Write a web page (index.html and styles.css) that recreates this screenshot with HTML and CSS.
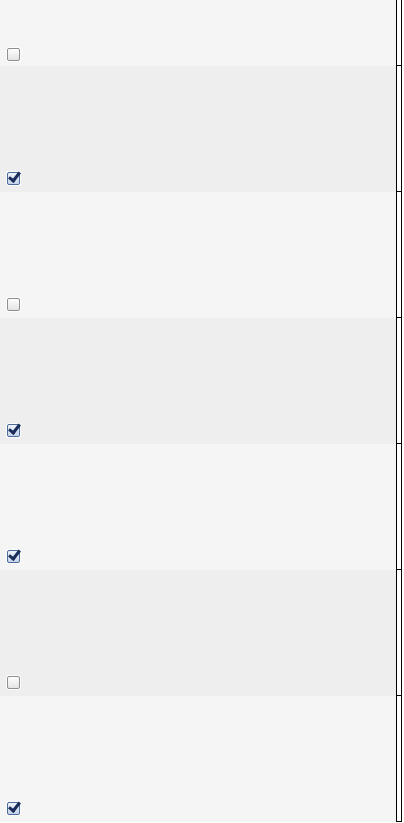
FILE: index.html
```html
<!DOCTYPE html>
<html lang="en">

<head>
	<meta charset="UTF-8">
	<meta name="viewport" content="width=device-width, initial-scale=1.0">
	<title>Liste</title>
	<link rel="stylesheet" href="styles.css">
</head>

<body>
	<div class="list">
		<div class="row"><div class="cell"><input type="checkbox"></div><div class="side"></div></div>
		<div class="row"><div class="cell"><input type="checkbox" checked></div><div class="side"></div></div>
		<div class="row"><div class="cell"><input type="checkbox"></div><div class="side"></div></div>
		<div class="row"><div class="cell"><input type="checkbox" checked></div><div class="side"></div></div>
		<div class="row"><div class="cell"><input type="checkbox" checked></div><div class="side"></div></div>
		<div class="row"><div class="cell"><input type="checkbox"></div><div class="side"></div></div>
		<div class="row"><div class="cell"><input type="checkbox" checked></div><div class="side"></div></div>
	</div>
</body>

</html>
```

FILE: styles.css
```css
body {
	margin: 0;
	background-color: #fff;
	font-family: Arial, "Liberation Sans", sans-serif;
}

.list {
	margin-top: -60px;
	width: 402px;
}

.row {
	display: flex;
	height: 126px;
}

.row:nth-child(odd) .cell {
	background-color: #f5f5f5;
}

.row:nth-child(even) .cell {
	background-color: #eeeeee;
}

.cell {
	flex: 1;
	display: flex;
	align-items: flex-end;
	padding: 0 0 7px 7px;
}

.row:first-child .cell {
	padding-bottom: 5px;
}

.side {
	width: 4px;
	border: 1px solid #000;
	border-top: none;
}

input[type="checkbox"] {
	appearance: none;
	-webkit-appearance: none;
	position: relative;
	width: 13px;
	height: 13px;
	margin: 0;
	border: 1px solid #8f8f8f;
	border-radius: 2px;
	background: linear-gradient(#fdfdfd, #e4e4e4);
	box-shadow: 0 0 0 1px rgba(255, 255, 255, 0.8);
	box-sizing: border-box;
}

input[type="checkbox"]:checked {
	border-color: #4d6b9a;
	background: linear-gradient(#eef3fa, #c6d4ea);
}

input[type="checkbox"]:checked::after {
	content: "";
	position: absolute;
	left: 3px;
	top: -3px;
	width: 4px;
	height: 9px;
	border: solid #1a2d5a;
	border-width: 0 3px 3px 0;
	transform: rotate(38deg);
}
```
